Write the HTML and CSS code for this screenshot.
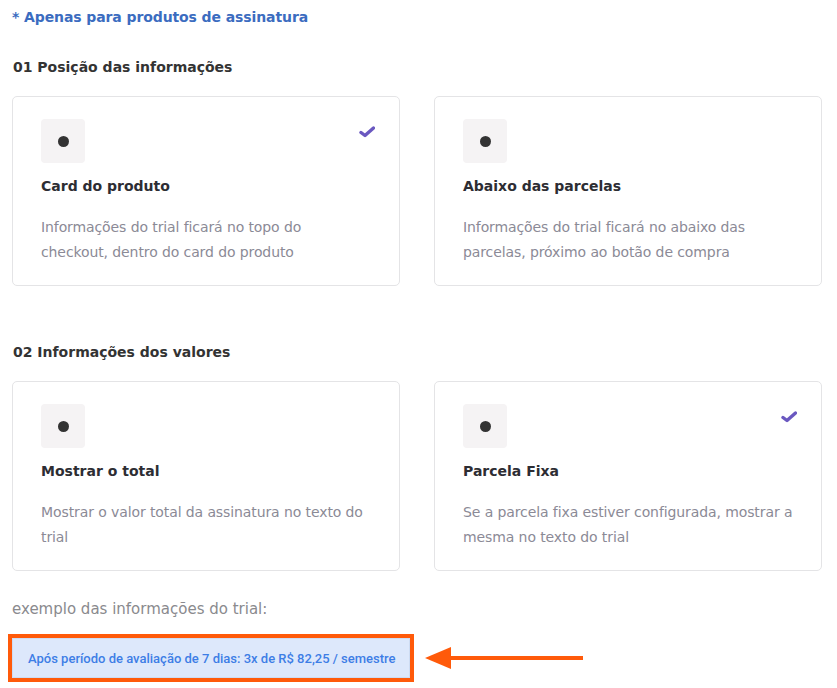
FILE: index.html
```html
<!DOCTYPE html>
<html lang="pt-BR">
<head>
<meta charset="utf-8">
<title>Trial</title>
<link rel="stylesheet" href="styles.css">
</head>
<body>
<div class="page">
  <p class="note">* Apenas para produtos de assinatura</p>

  <h2 class="section-title first">01 Posição das informações</h2>
  <div class="cards">
    <div class="card">
      <div class="icon-box"><span class="dot"></span></div>
      <svg class="check" width="16" height="12" viewBox="0 0 16 12"><polyline points="2,6.5 6,9.5 14.5,2" fill="none" stroke="#6a58c0" stroke-width="3.4" stroke-linecap="round" stroke-linejoin="round"/></svg>
      <h3 class="card-title">Card do produto</h3>
      <p class="card-desc">Informações do trial ficará no topo do<br>checkout, dentro do card do produto</p>
    </div>
    <div class="card">
      <div class="icon-box"><span class="dot"></span></div>
      <h3 class="card-title">Abaixo das parcelas</h3>
      <p class="card-desc">Informações do trial ficará no abaixo das parcelas, próximo ao botão de compra</p>
    </div>
  </div>

  <h2 class="section-title second">02 Informações dos valores</h2>
  <div class="cards">
    <div class="card">
      <div class="icon-box"><span class="dot"></span></div>
      <h3 class="card-title">Mostrar o total</h3>
      <p class="card-desc">Mostrar o valor total da assinatura no texto do trial</p>
    </div>
    <div class="card">
      <div class="icon-box"><span class="dot"></span></div>
      <svg class="check" width="16" height="12" viewBox="0 0 16 12"><polyline points="2,6.5 6,9.5 14.5,2" fill="none" stroke="#6a58c0" stroke-width="3.4" stroke-linecap="round" stroke-linejoin="round"/></svg>
      <h3 class="card-title">Parcela Fixa</h3>
      <p class="card-desc">Se a parcela fixa estiver configurada, mostrar a mesma no texto do trial</p>
    </div>
  </div>

  <p class="example-label">exemplo das informações do trial:</p>
  <div class="example-row">
    <div class="frame">
      <div class="example-box">Após período de avaliação de 7 dias: 3x de R$ 82,25 / semestre</div>
    </div>
    <svg class="arrow" width="160" height="24" viewBox="0 0 160 24"><polygon points="0,12 26,1 26,23" fill="#ff5a0a"/><rect x="24" y="10" width="134" height="4" fill="#ff5a0a"/></svg>
  </div>
</div>
</body>
</html>
```
FILE: styles.css
```css
* { box-sizing: border-box; }
html, body { margin: 0; padding: 0; background: #fff; }
body { font-family: "DejaVu Sans", "Noto Sans", sans-serif; color: #333; }
.page { padding: 7px 15px 0 12px; width: 837px; }
.note { margin: 0; font-size: 14px; line-height: 20px; font-weight: bold; color: #3b6cc0; letter-spacing: -0.1px; }
.section-title { margin: 30px 0 19px 1px; font-size: 14px; line-height: 20px; font-weight: 600; color: #333; }
.section-title.second { margin-top: 56px; }
.cards { display: grid; grid-template-columns: 388px 388px; column-gap: 34px; }
.card { position: relative; border: 1px solid #e4e4e6; border-radius: 5px; padding: 22px 26px 21px 28px; height: 190px; }
.icon-box { width: 44px; height: 44px; border-radius: 4px; background: #f5f3f4; display: flex; align-items: center; justify-content: center; }
.dot { width: 11px; height: 11px; border-radius: 50%; background: #333; }
.check { position: absolute; top: 29px; right: 24px; }
.card-title { margin: 13px 0 0; font-size: 14px; line-height: 20px; font-weight: 600; color: #2d2d33; }
.card-desc { margin: 19px 0 0; font-size: 14px; line-height: 25px; color: #8b8a96; letter-spacing: -0.1px; }
.example-label { margin: 28px 0 0; font-size: 15px; line-height: 20px; color: #8a8a8e; }
.example-row { display: flex; align-items: center; margin: 15px 0 0 -4px; }
.frame { border: 4px solid #ff5a0a; width: 406px; height: 48px; }
.example-box { height: 100%; background: #dde8fb; border: 1px solid #cddcf3; padding: 0 0 0 15px; display: flex; align-items: center; font-family: Roboto, "Liberation Sans", sans-serif; font-size: 13px; font-weight: 500; color: #3d7ee6; }
.arrow { margin-left: 11px; }
```
